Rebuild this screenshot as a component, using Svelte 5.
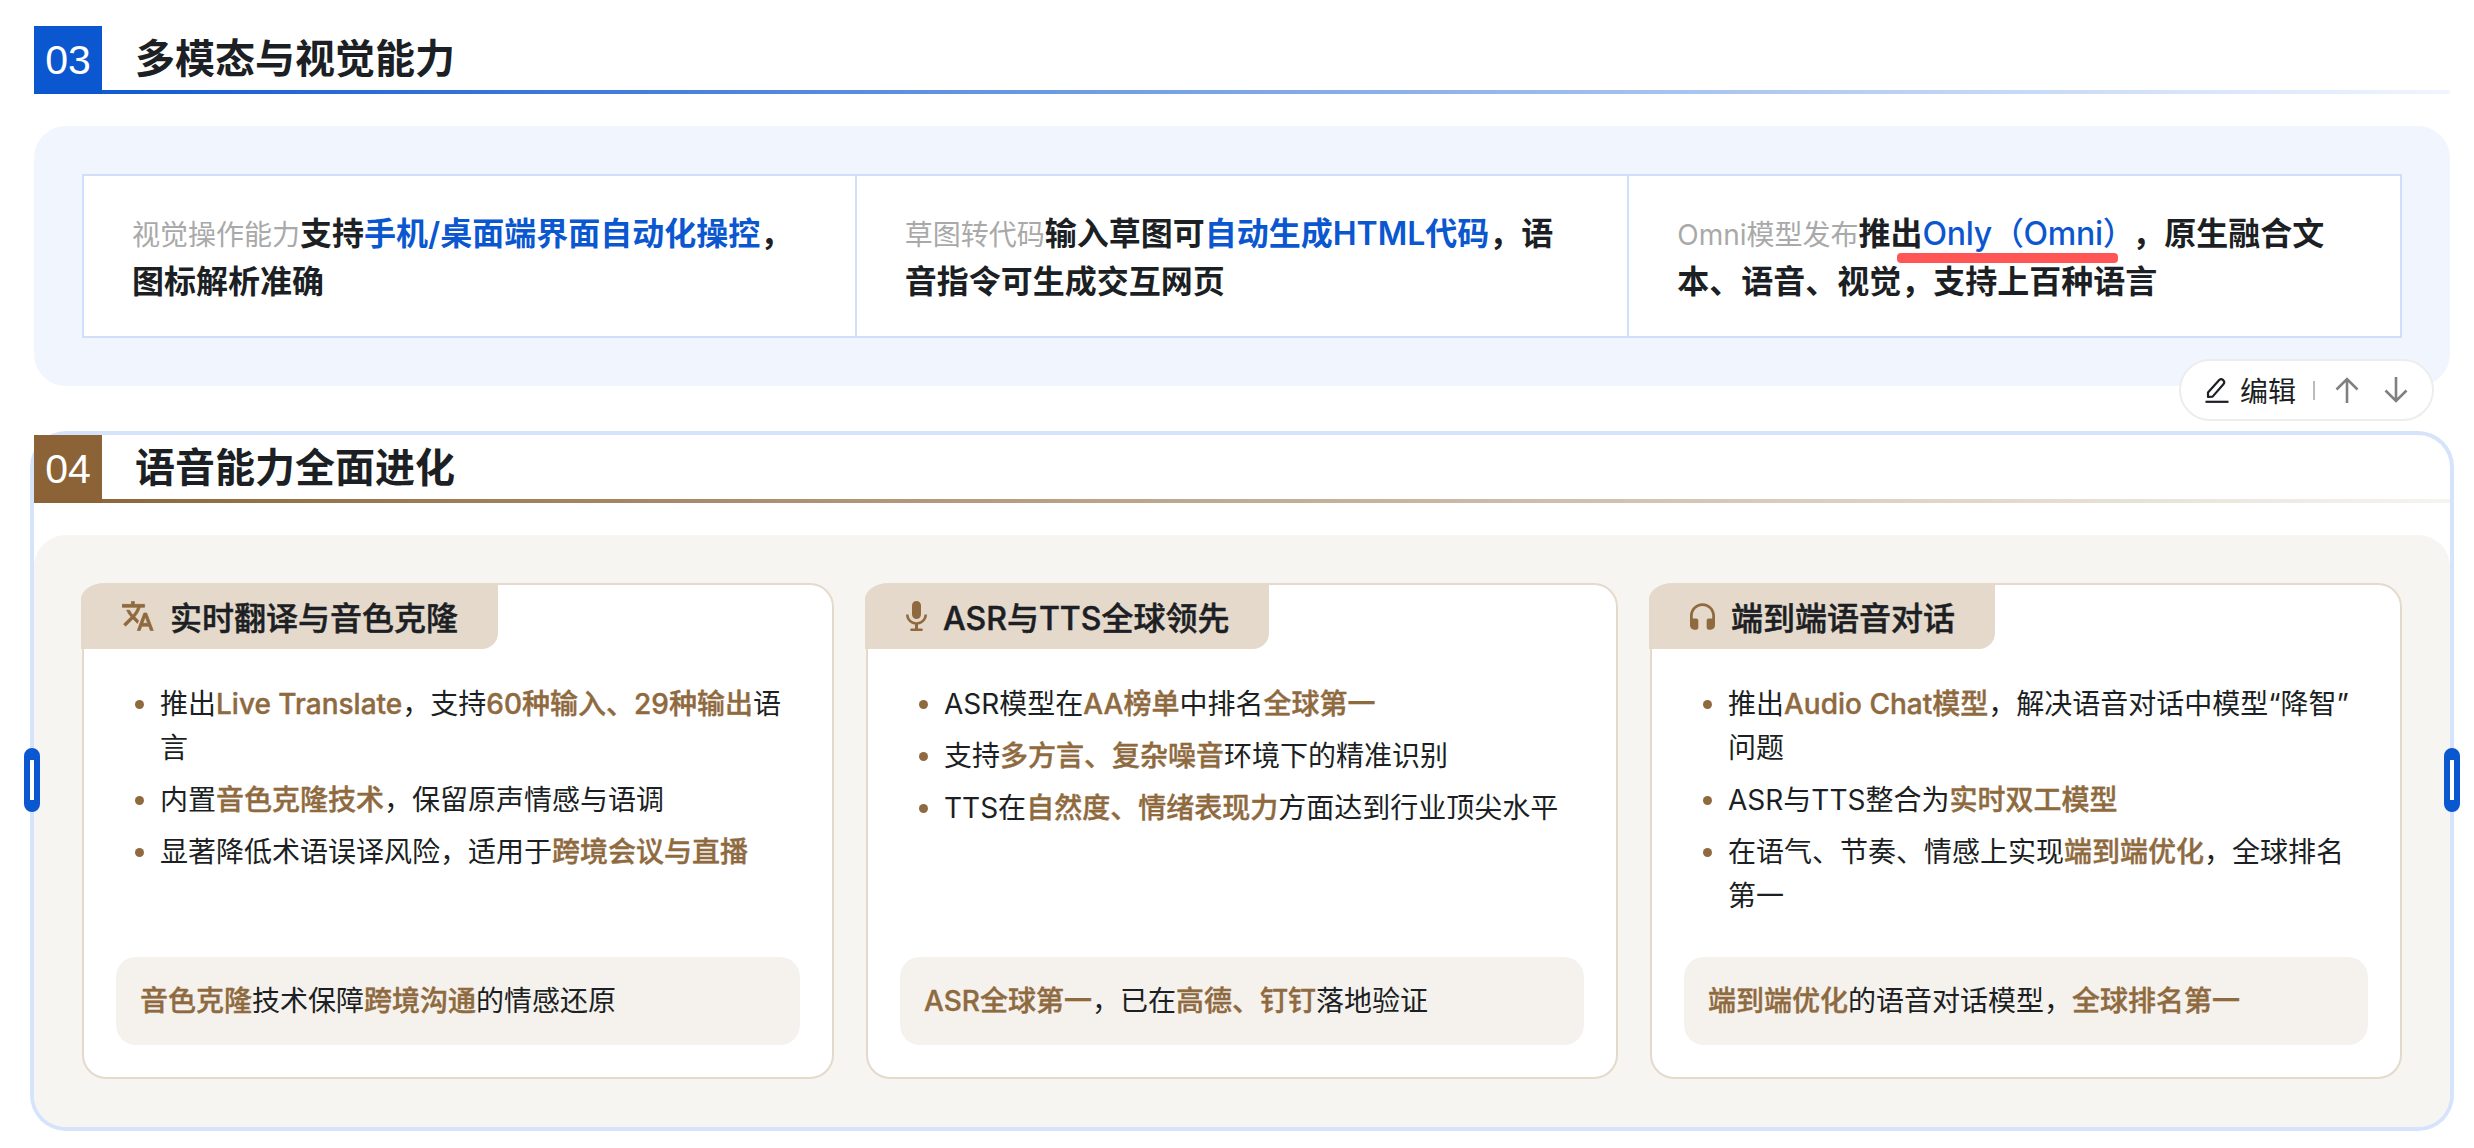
<script lang="ts">
	const caps = [
		{ label: '视觉操作能力', parts: [['支持'], ['手机/桌面端界面自动化操控', 'b'], ['，图标解析准确']] },
		{ label: '草图转代码', parts: [['输入草图可'], ['自动生成HTML代码', 'b'], ['，语音指令可生成交互网页']] },
		{ label: 'Omni模型发布', parts: [['推出'], ['Only（Omni）', 'u'], ['，原生融合文本、语音、视觉，支持上百种语言']] }
	];

	const cards = [
		{
			icon: 'translate',
			title: '实时翻译与音色克隆',
			items: [
				[['推出'], ['Live Translate', 'h'], ['，支持'], ['60种输入、29种输出', 'h'], ['语言']],
				[['内置'], ['音色克隆技术', 'h'], ['，保留原声情感与语调']],
				[['显著降低术语误译风险，适用于'], ['跨境会议与直播', 'h']]
			],
			note: [['音色克隆', 'h'], ['技术保障'], ['跨境沟通', 'h'], ['的情感还原']]
		},
		{
			icon: 'mic',
			title: 'ASR与TTS全球领先',
			items: [
				[['ASR模型在'], ['AA榜单', 'h'], ['中排名'], ['全球第一', 'h']],
				[['支持'], ['多方言、复杂噪音', 'h'], ['环境下的精准识别']],
				[['TTS在'], ['自然度、情绪表现力', 'h'], ['方面达到行业顶尖水平']]
			],
			note: [['ASR全球第一', 'h'], ['，已在'], ['高德、钉钉', 'h'], ['落地验证']]
		},
		{
			icon: 'headset',
			title: '端到端语音对话',
			items: [
				// zero-width space: the break after the closing quote is not allowed otherwise
				[['推出'], ['Audio Chat模型', 'h'], ['，解决语音对话中模型“降智”\u200b问题']],
				[['ASR与TTS整合为'], ['实时双工模型', 'h']],
				[['在语气、节奏、情感上实现'], ['端到端优化', 'h'], ['，全球排名第一']]
			],
			note: [['端到端优化', 'h'], ['的语音对话模型，'], ['全球排名第一', 'h']]
		}
	];
</script>

<div class="page">
	<section class="section blue">
		<header class="head">
			<span class="num">03</span>
			<h2>多模态与视觉能力</h2>
		</header>
		<div class="panel">
			<div class="table">
				{#each caps as cap}
					<div class="cell">
						<span class="label">{cap.label}</span>{#each cap.parts as [text, kind]}<span class={kind ?? ''}>{text}</span>{/each}
					</div>
				{/each}
			</div>
		</div>
	</section>

	<section class="section brown selected">
		<div class="toolbar">
			<svg class="pencil" viewBox="0 0 24 26" fill="none" stroke="currentColor" stroke-width="2.2" stroke-linejoin="round">
				<path d="M3 15.5 14.2 3a3 3 0 0 1 4.4 4L7.6 19.6 3 20z" />
				<path d="M0.5 24.8h23" />
			</svg>
			<span class="edit">编辑</span>
			<i class="sep"></i>
			<svg class="arrow" viewBox="0 0 24 26" fill="none" stroke="currentColor" stroke-width="2.6">
				<path d="M12 26V2M1.5 12.5 12 2l10.5 10.5" />
			</svg>
			<svg class="arrow" viewBox="0 0 24 26" fill="none" stroke="currentColor" stroke-width="2.6">
				<path d="M12 0v24M1.5 13.5 12 24l10.5-10.5" />
			</svg>
		</div>
		<i class="handle left"></i>
		<i class="handle right"></i>

		<header class="head">
			<span class="num">04</span>
			<h2>语音能力全面进化</h2>
		</header>
		<div class="panel">
			<div class="cards">
				{#each cards as card}
					<article class="card">
						<h3 class="tab">
							{#if card.icon === 'translate'}
								<svg class="ico" width="32" height="30" viewBox="1.5 2 22 20" fill="currentColor" stroke="currentColor" stroke-width="0.5">
									<path d="M12.87 15.07l-2.54-2.51.03-.03c1.74-1.94 2.98-4.17 3.71-6.53H17V4h-7V2H8v2H1v1.99h11.17C11.5 7.92 10.44 9.75 9 11.35 8.07 10.32 7.3 9.19 6.69 8h-2c.73 1.63 1.73 3.17 2.98 4.56l-5.09 5.02L4 19l5-5 3.11 3.11.76-2.04zM18.5 10h-2L12 22h2l1.12-3h4.75L21 22h2l-4.5-12zm-2.62 7l1.62-4.33L19.12 17h-3.24z" />
								</svg>
							{:else if card.icon === 'mic'}
								<svg class="ico" width="21" height="30" viewBox="5 2 14 20" fill="currentColor">
									<path d="M12 14c1.66 0 2.99-1.34 2.99-3L15 5c0-1.66-1.34-3-3-3S9 3.34 9 5v6c0 1.66 1.34 3 3 3zm5.3-3c0 3-2.54 5.1-5.3 5.1S6.7 14 6.7 11H5c0 3.41 2.72 6.23 6 6.72V20.4H8.6a.8.8 0 0 0 0 1.6h6.8a.8.8 0 0 0 0-1.6H13v-2.68c3.28-.48 6-3.3 6-6.72h-1.7z" />
								</svg>
							{:else}
								<svg class="ico" width="25" height="27" viewBox="3 1 18 19" fill="currentColor">
									<path d="M12 1c-4.97 0-9 4.03-9 9v7c0 1.66 1.34 3 3 3h1.500c.83 0 1.500-.67 1.500-1.500v-5c0-.83-.67-1.500-1.500-1.500H5v-2c0-3.870 3.130-7 7-7s7 3.130 7 7v2h-2.500c-.83 0-1.500.67-1.500 1.500v5c0 .83.67 1.500 1.500 1.500H18c1.660 0 3-1.340 3-3v-7c0-4.970-4.030-9-9-9z" />
								</svg>
							{/if}
							<span>{card.title}</span>
						</h3>
						<ul>
							{#each card.items as item}
								<li>{#each item as [text, kind]}<span class={kind ?? ''}>{text}</span>{/each}</li>
							{/each}
						</ul>
						<p class="note">{#each card.note as [text, kind]}<span class={kind ?? ''}>{text}</span>{/each}</p>
					</article>
				{/each}
			</div>
		</div>
	</section>
</div>

<style>
	:global(body) {
		margin: 0;
		background: #fff;
		color: #1c1f23;
		font-family: Inter, 'Noto Sans CJK SC', sans-serif;
	}

	.page {
		box-sizing: border-box;
		width: 2474px;
		padding: 26px 24px 0 34px;
	}

	.section {
		position: relative;
		margin-bottom: 49px;
	}

	.selected {
		border-radius: 32px;
		box-shadow: 0 0 0 4px #d6e4fb;
	}

	.head {
		display: flex;
		align-items: flex-start;
		height: 68px;
		background-repeat: no-repeat;
		background-position: left bottom;
		background-size: 100% 4px;
	}

	.blue .head {
		background-image: linear-gradient(90deg, #0b57d0, #f0f5fe);
	}

	.brown .head {
		background-image: linear-gradient(90deg, #8b6337, #f6f4f0);
	}

	.num {
		display: flex;
		align-items: center;
		justify-content: center;
		width: 68px;
		height: 68px;
		color: #fff;
		font-family: 'Liberation Sans', sans-serif;
		font-size: 41px;
	}

	.blue .num {
		background: #0b57d0;
	}

	.brown .num {
		background: #8b6337;
	}

	h2 {
		margin: 0 0 0 33px;
		font-size: 40px;
		font-weight: 700;
		line-height: 66px;
	}

	.panel {
		margin-top: 32px;
		padding: 48px;
		border-radius: 32px;
	}

	.blue .panel {
		background: #f0f5fe;
	}

	.brown .panel {
		background: #f7f5f1;
	}

	.table {
		display: grid;
		grid-template-columns: repeat(3, 1fr);
		gap: 2px;
		border: 2px solid #d0e0fa;
		background: #d0e0fa;
	}

	.cell {
		padding: 34px 48px 30px;
		background: #fff;
		font-size: 32px;
		font-weight: 600;
		line-height: 48px;
	}

	.label {
		color: #a9a9a9;
		font-size: 28px;
		font-weight: 400;
		line-height: 1;
	}

	.b,
	.u {
		color: #0b57d0;
	}

	.u {
		position: relative;
		margin-right: 14px;
		font-weight: 500;
		letter-spacing: -0.3px;
	}

	/* hand-drawn mark on top of the text */
	.u::after {
		content: '';
		position: absolute;
		left: -26px;
		right: 0;
		bottom: -10px;
		height: 10px;
		border-radius: 4px;
		background: #ff5555;
	}

	.cards {
		display: grid;
		grid-template-columns: repeat(3, 752px);
		gap: 32px;
	}

	.card {
		display: flex;
		flex-direction: column;
		box-sizing: border-box;
		border: 2px solid #e5d9cc;
		border-radius: 24px;
		background: #fff;
	}

	.tab {
		display: flex;
		align-items: center;
		gap: 16px;
		align-self: flex-start;
		height: 66px;
		margin: -2px 0 0 -3px;
		padding: 0 40px 0 41px;
		border-radius: 24px 0 16px 0 / 16px 0 16px 0;
		background: #e5d9cc;
		font-size: 32px;
		font-weight: 500;
		-webkit-text-stroke: 0.5px currentColor;
	}

	.ico {
		flex: none;
		color: #8f6a3f;
	}

	ul {
		min-height: 236px;
		margin: 33px 32px 0;
		padding: 0 0 0 44px;
		font-size: 28px;
		line-height: 44px;
	}

	li + li {
		margin-top: 8px;
	}

	li::marker {
		color: #8f6a3f;
	}

	.h {
		color: #8f6a3f;
		font-weight: 500;
		-webkit-text-stroke: 0.4px currentColor;
	}

	.note {
		display: flex;
		align-items: center;
		box-sizing: border-box;
		height: 88px;
		margin: 39px 32px 32px;
		padding: 0 24px 4px;
		border-radius: 20px;
		background: #f5f2ee;
		font-size: 28px;
	}

	.toolbar {
		position: absolute;
		top: -76px;
		right: 16px;
		z-index: 2;
		display: flex;
		align-items: center;
		box-sizing: border-box;
		width: 255px;
		height: 62px;
		padding-left: 24px;
		border: 2px solid #ededed;
		border-radius: 31px;
		background: #fff;
	}

	.pencil {
		width: 24px;
		height: 26px;
		color: #1c1f23;
	}

	.edit {
		margin-left: 11px;
		font-size: 28px;
	}

	.sep {
		width: 2px;
		height: 19px;
		margin: 0 20px 0 17px;
		background: #bbb;
	}

	.arrow {
		width: 24px;
		height: 26px;
		color: #808080;
	}

	.arrow + .arrow {
		margin-left: 25px;
	}

	.handle {
		position: absolute;
		top: 313px;
		z-index: 2;
		box-sizing: border-box;
		width: 16px;
		height: 64px;
		border: 6px solid #0b57d0;
		border-width: 12px 6px;
		border-radius: 8px;
		background: #fff;
	}

	.handle.left {
		left: -10px;
	}

	.handle.right {
		right: -10px;
	}
</style>
